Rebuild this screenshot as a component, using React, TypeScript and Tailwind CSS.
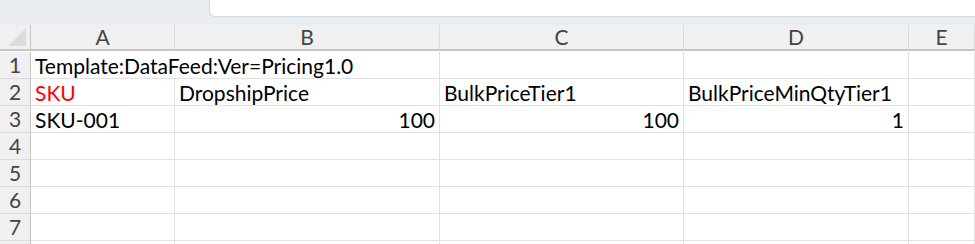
import React from 'react';

// column widths measured from the sheet
const cols = ['A', 'B', 'C', 'D', 'E'];

type Cell = { text?: string; align?: 'left' | 'right'; red?: boolean; span?: number };

const rows: Cell[][] = [
  [{ text: 'Template:DataFeed:Ver=Pricing1.0', span: 2 }, {}, {}, {}],
  [{ text: 'SKU', red: true }, { text: 'DropshipPrice' }, { text: 'BulkPriceTier1' }, { text: 'BulkPriceMinQtyTier1' }, {}],
  [{ text: 'SKU-001' }, { text: '100', align: 'right' }, { text: '100', align: 'right' }, { text: '1', align: 'right' }, {}],
  [{}, {}, {}, {}, {}],
  [{}, {}, {}, {}, {}],
  [{}, {}, {}, {}, {}],
  [{}, {}, {}, {}, {}],
  [{}, {}, {}, {}, {}],
];

const App: React.FC = () => {
  return (
    <div
      className="w-[975px] h-[244px] overflow-hidden bg-white text-black"
      style={{ fontFamily: 'Lato, "Liberation Sans", sans-serif' }}
    >
      {/* top strip with formula box */}
      <div className="flex h-[25px] bg-[#e9edf1]">
        <div className="w-[209px] shrink-0" />
        <div className="flex-1 h-[17px] bg-white border-l border-b border-[#d3d8dd] rounded-bl-[6px]" />
      </div>

      <div className="grid grid-cols-[31px_144px_265px_244px_225px_1fr] auto-rows-[27px]">
        {/* corner */}
        <div className="h-[26px] bg-[#f0f0f0] border-r border-b-2 border-[#c6c6c6] relative">
          <div
            className="absolute right-[4px] bottom-[3px] w-[18px] h-[18px] bg-[#dcdcdc]"
            style={{ clipPath: 'polygon(100% 0, 100% 100%, 0 100%)' }}
          />
        </div>
        {cols.map((c) => (
          <div
            key={c}
            className="h-[26px] bg-[#f0f0f0] border-r border-[#dadada] border-b-2 border-b-[#c6c6c6] flex items-center justify-center text-[21px] text-[#444]"
          >
            {c}
          </div>
        ))}

        {rows.map((r, i) => (
          <React.Fragment key={i}>
            <div className="bg-[#f0f0f0] border-r border-r-[#c6c6c6] border-b border-[#dcdcdc] flex items-center justify-center text-[21px] text-[#444]">
              {i < 7 ? i + 1 : ''}
            </div>
            {r.map((cell, j) => (
              <div
                key={j}
                className={`border-r border-b border-[#e1e1e1] flex items-center px-[4px] whitespace-nowrap text-[21px] leading-none ${
                  cell.span === 2 ? 'col-span-2' : ''
                } ${cell.align === 'right' ? 'justify-end' : 'justify-start'} ${cell.red ? 'text-[#ff0000]' : 'text-black'}`}
              >
                {cell.text}
              </div>
            ))}
          </React.Fragment>
        ))}
      </div>
    </div>
  );
};

export default App;
